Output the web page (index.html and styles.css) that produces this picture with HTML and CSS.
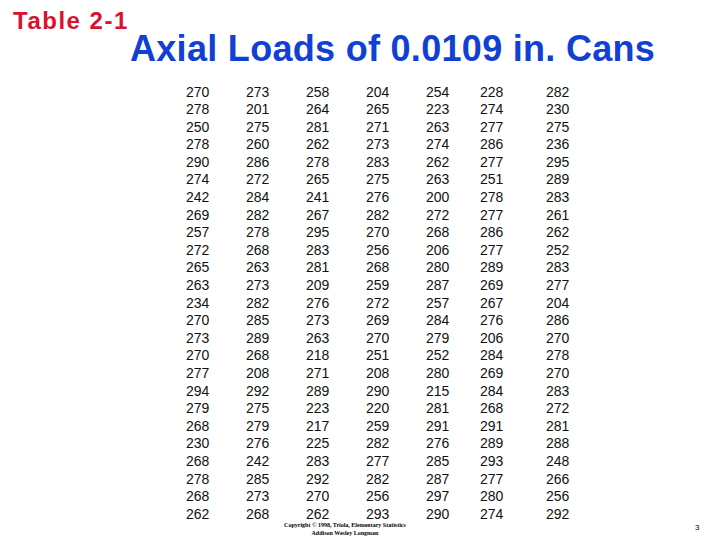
FILE: index.html
```html
<!DOCTYPE html>
<html>
<head>
<meta charset="utf-8">
<link rel="stylesheet" href="styles.css">
</head>
<body>
<header class="head">
  <div class="label">Table 2-1</div>
  <h1 class="title">Axial Loads of 0.0109 in. Cans</h1>
</header>
<div class="data">
<span>270</span><span>273</span><span>258</span><span>204</span><span>254</span><span>228</span><span>282</span>
<span>278</span><span>201</span><span>264</span><span>265</span><span>223</span><span>274</span><span>230</span>
<span>250</span><span>275</span><span>281</span><span>271</span><span>263</span><span>277</span><span>275</span>
<span>278</span><span>260</span><span>262</span><span>273</span><span>274</span><span>286</span><span>236</span>
<span>290</span><span>286</span><span>278</span><span>283</span><span>262</span><span>277</span><span>295</span>
<span>274</span><span>272</span><span>265</span><span>275</span><span>263</span><span>251</span><span>289</span>
<span>242</span><span>284</span><span>241</span><span>276</span><span>200</span><span>278</span><span>283</span>
<span>269</span><span>282</span><span>267</span><span>282</span><span>272</span><span>277</span><span>261</span>
<span>257</span><span>278</span><span>295</span><span>270</span><span>268</span><span>286</span><span>262</span>
<span>272</span><span>268</span><span>283</span><span>256</span><span>206</span><span>277</span><span>252</span>
<span>265</span><span>263</span><span>281</span><span>268</span><span>280</span><span>289</span><span>283</span>
<span>263</span><span>273</span><span>209</span><span>259</span><span>287</span><span>269</span><span>277</span>
<span>234</span><span>282</span><span>276</span><span>272</span><span>257</span><span>267</span><span>204</span>
<span>270</span><span>285</span><span>273</span><span>269</span><span>284</span><span>276</span><span>286</span>
<span>273</span><span>289</span><span>263</span><span>270</span><span>279</span><span>206</span><span>270</span>
<span>270</span><span>268</span><span>218</span><span>251</span><span>252</span><span>284</span><span>278</span>
<span>277</span><span>208</span><span>271</span><span>208</span><span>280</span><span>269</span><span>270</span>
<span>294</span><span>292</span><span>289</span><span>290</span><span>215</span><span>284</span><span>283</span>
<span>279</span><span>275</span><span>223</span><span>220</span><span>281</span><span>268</span><span>272</span>
<span>268</span><span>279</span><span>217</span><span>259</span><span>291</span><span>291</span><span>281</span>
<span>230</span><span>276</span><span>225</span><span>282</span><span>276</span><span>289</span><span>288</span>
<span>268</span><span>242</span><span>283</span><span>277</span><span>285</span><span>293</span><span>248</span>
<span>278</span><span>285</span><span>292</span><span>282</span><span>287</span><span>277</span><span>266</span>
<span>268</span><span>273</span><span>270</span><span>256</span><span>297</span><span>280</span><span>256</span>
<span>262</span><span>268</span><span>262</span><span>293</span><span>290</span><span>274</span><span>292</span>
</div>
<footer class="foot">
  <div class="copy">Copyright © 1998, Triola, Elementary Statistics<br>Addison Wesley Longman</div>
  <div class="page">3</div>
</footer>
</body>
</html>
```
FILE: styles.css
```css
html, body {
  margin: 0;
  padding: 0;
  background: #fff;
}
body {
  width: 720px;
  height: 540px;
  overflow: hidden;
  font-family: "Liberation Sans", Arial, sans-serif;
  color: #000;
}
.head {
  padding-top: 7px;
}
.label {
  margin-left: 13px;
  font-size: 24px;
  line-height: 28px;
  font-weight: bold;
  color: #dc1030;
  letter-spacing: 1.5px;
}
.title {
  margin: 0.5px 0 0 130px;
  font-size: 36px;
  line-height: 26px;
  font-weight: bold;
  color: #1040d4;
  letter-spacing: 0.3px;
}
.data {
  margin: 22px 0 0 186px;
  display: grid;
  grid-template-columns: 60px 60px 60px 60px 54px 66px 40px;
  grid-auto-rows: 17.6px;
  font-size: 14px;
  line-height: 17.6px;
  color: #111;
}
.foot {
  margin-top: -2px;
  display: flex;
  align-items: flex-start;
}
.copy {
  margin-left: 284px;
  width: 122px;
  text-align: center;
  font-family: "Liberation Serif", serif;
  font-weight: bold;
  font-size: 6px;
  line-height: 8px;
}
.page {
  margin-left: 289px;
  margin-top: 2px;
  font-size: 8px;
  line-height: 10px;
}
```
